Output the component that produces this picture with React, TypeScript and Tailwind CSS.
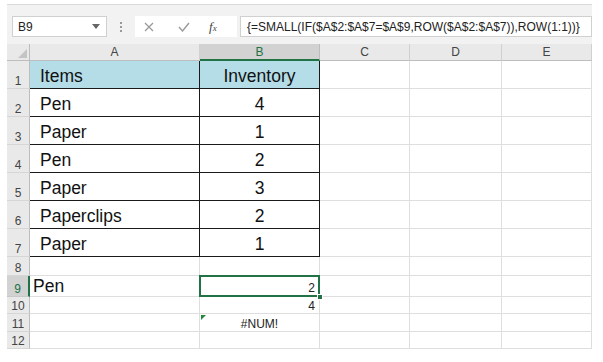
const font = { fontFamily: '"Liberation Sans", Arial, sans-serif' };

type Row = { n: string; h: string; a?: string; b?: string; kind: "data" | "head" | "plain" };

const rows: Row[] = [
  { n: "1", h: "h-[28px]", a: "Items", b: "Inventory", kind: "head" },
  { n: "2", h: "h-[28px]", a: "Pen", b: "4", kind: "data" },
  { n: "3", h: "h-[28px]", a: "Paper", b: "1", kind: "data" },
  { n: "4", h: "h-[28px]", a: "Pen", b: "2", kind: "data" },
  { n: "5", h: "h-[28px]", a: "Paper", b: "3", kind: "data" },
  { n: "6", h: "h-[28px]", a: "Paperclips", b: "2", kind: "data" },
  { n: "7", h: "h-[28px]", a: "Paper", b: "1", kind: "data" },
];

function Gutter({ n, h, active }: { n: string; h: string; active?: boolean }) {
  return (
    <div
      className={`${h} flex items-end justify-center pb-[1px] text-[12px] leading-none ${
        active
          ? "bg-[#d2d2d2] text-[#217346] border-r-2 border-r-[#217346] border-b border-b-[#c8c8c8]"
          : "bg-[#e9e9e9] text-[#444] border-r border-r-[#bdbdbd] border-b border-b-[#d6d6d6]"
      }`}
    >
      {n}
    </div>
  );
}

function Empty({ h }: { h: string }) {
  return <div className={`${h} border-r border-b border-[#dedede]`} />;
}

export default function App() {
  return (
    <div className="w-[603px] h-[362px] bg-white overflow-hidden" style={font}>
      <div className="ml-[7px] w-[585px]">
        {/* formula bar */}
        <div className="mt-[4px] border-t border-[#d9d9d9] bg-[#f2f2f2] pt-[11px] pb-[7px]">
          <div className="flex items-center h-[21px]">
            <div className="ml-[5px] w-[95px] h-full bg-white border border-[#d0d0d0] flex items-center justify-between pl-[5px] pr-[6px]">
              <span className="text-[12px] text-[#222]">B9</span>
              <svg width="8" height="5" viewBox="0 0 8 5"><path d="M0 0h8L4 5z" fill="#666" /></svg>
            </div>
            <div className="w-[28px] flex flex-col items-center gap-[2px]">
              <span className="w-[2px] h-[2px] bg-[#999]" />
              <span className="w-[2px] h-[2px] bg-[#999]" />
              <span className="w-[2px] h-[2px] bg-[#999]" />
            </div>
            <div className="w-[102px] h-full bg-white flex items-center">
              <svg className="ml-[9px]" width="10" height="10" viewBox="0 0 10 10">
                <path d="M1 1l8 8M9 1l-8 8" stroke="#9a9a9a" strokeWidth="1.3" />
              </svg>
              <svg className="ml-[24px]" width="12" height="10" viewBox="0 0 12 10">
                <path d="M1 5l3.5 4L11 1" stroke="#9a9a9a" strokeWidth="1.4" fill="none" />
              </svg>
              <span className="ml-[19px] text-[13px] italic text-[#444]" style={{ fontFamily: '"Liberation Serif", serif' }}>
                f<span className="text-[9px]">x</span>
              </span>
            </div>
            <div className="ml-[3px] flex-1 h-full bg-white border border-[#d0d0d0] flex items-center pl-[6px] text-[12px] text-[#222] whitespace-nowrap">
              {"{=SMALL(IF($A$2:$A$7=$A$9,ROW($A$2:$A$7)),ROW(1:1))}"}
            </div>
          </div>
        </div>

        {/* sheet */}
        <div className="grid grid-cols-[23px_170px_120px_90px_92px_90px]">
          {/* column headers */}
          <div className="h-[17px] bg-[#e9e9e9] border-r border-b border-[#bdbdbd] flex items-end justify-end p-[2px]">
            <svg width="9" height="9" viewBox="0 0 9 9"><path d="M9 0v9H0z" fill="#c4c4c4" /></svg>
          </div>
          {["A", "B", "C", "D", "E"].map(c => (
            <div
              key={c}
              className={`h-[17px] flex items-center justify-center text-[12px] leading-none ${
                c === "B"
                  ? "bg-[#d2d2d2] text-[#217346] border-b-2 border-b-[#217346] border-r border-r-[#bdbdbd]"
                  : "bg-[#e9e9e9] text-[#444] border-r border-r-[#d0d0d0] border-b border-b-[#bdbdbd]"
              }`}
            >
              {c}
            </div>
          ))}

          {rows.map(r => (
            <div key={r.n} className="contents">
              <Gutter n={r.n} h={r.h} />
              <div className={`${r.h} border-r border-b border-[#1a1a1a] flex items-end pl-[10px] pb-[3px] text-[17.5px] leading-none text-[#111] ${r.kind === "head" ? "bg-[#b5dde7]" : ""}`}>
                {r.a}
              </div>
              <div className={`${r.h} border-r border-b border-[#1a1a1a] flex items-end justify-center pb-[3px] text-[17.5px] leading-none text-[#111] ${r.kind === "head" ? "bg-[#b5dde7]" : ""}`}>
                {r.b}
              </div>
              <Empty h={r.h} />
              <Empty h={r.h} />
              <Empty h={r.h} />
            </div>
          ))}

          {/* row 8 */}
          <Gutter n="8" h="h-[19px]" />
          <Empty h="h-[19px]" />
          <Empty h="h-[19px]" />
          <Empty h="h-[19px]" />
          <Empty h="h-[19px]" />
          <Empty h="h-[19px]" />

          {/* row 9 */}
          <Gutter n="9" h="h-[21px]" active />
          <div className="h-[21px] border-r border-b border-[#dedede] flex items-end pl-[3px] pb-[1px] text-[17.5px] leading-none text-[#111]">Pen</div>
          <div className="h-[21px] relative border-r border-b border-[#dedede] flex items-end justify-end pr-[4px] pb-[2px] text-[12px] leading-none text-[#222]">
            2
            <div className="absolute -left-[1px] -top-[1px] -right-[1px] -bottom-[1px] border-2 border-[#217346]" />
            <div className="absolute -right-[4px] -bottom-[4px] w-[6px] h-[6px] bg-[#217346] border border-white" />
          </div>
          <Empty h="h-[21px]" />
          <Empty h="h-[21px]" />
          <Empty h="h-[21px]" />

          {/* row 10 */}
          <Gutter n="10" h="h-[17px]" />
          <Empty h="h-[17px]" />
          <div className="h-[17px] border-r border-b border-[#dedede] flex items-end justify-end pr-[4px] pb-[1px] text-[12px] leading-none text-[#222]">4</div>
          <Empty h="h-[17px]" />
          <Empty h="h-[17px]" />
          <Empty h="h-[17px]" />

          {/* row 11 */}
          <Gutter n="11" h="h-[18px]" />
          <Empty h="h-[18px]" />
          <div className="h-[18px] relative border-r border-b border-[#dedede] flex items-end justify-center pb-[1px] text-[12px] leading-none text-[#222]">
            <svg className="absolute left-[1px] top-[1px]" width="5" height="5" viewBox="0 0 5 5"><path d="M0 0h5L0 5z" fill="#1f8a3a" /></svg>
            #NUM!
          </div>
          <Empty h="h-[18px]" />
          <Empty h="h-[18px]" />
          <Empty h="h-[18px]" />

          {/* row 12 */}
          <Gutter n="12" h="h-[17px]" />
          <Empty h="h-[17px]" />
          <Empty h="h-[17px]" />
          <Empty h="h-[17px]" />
          <Empty h="h-[17px]" />
          <Empty h="h-[17px]" />
        </div>
      </div>
    </div>
  );
}
